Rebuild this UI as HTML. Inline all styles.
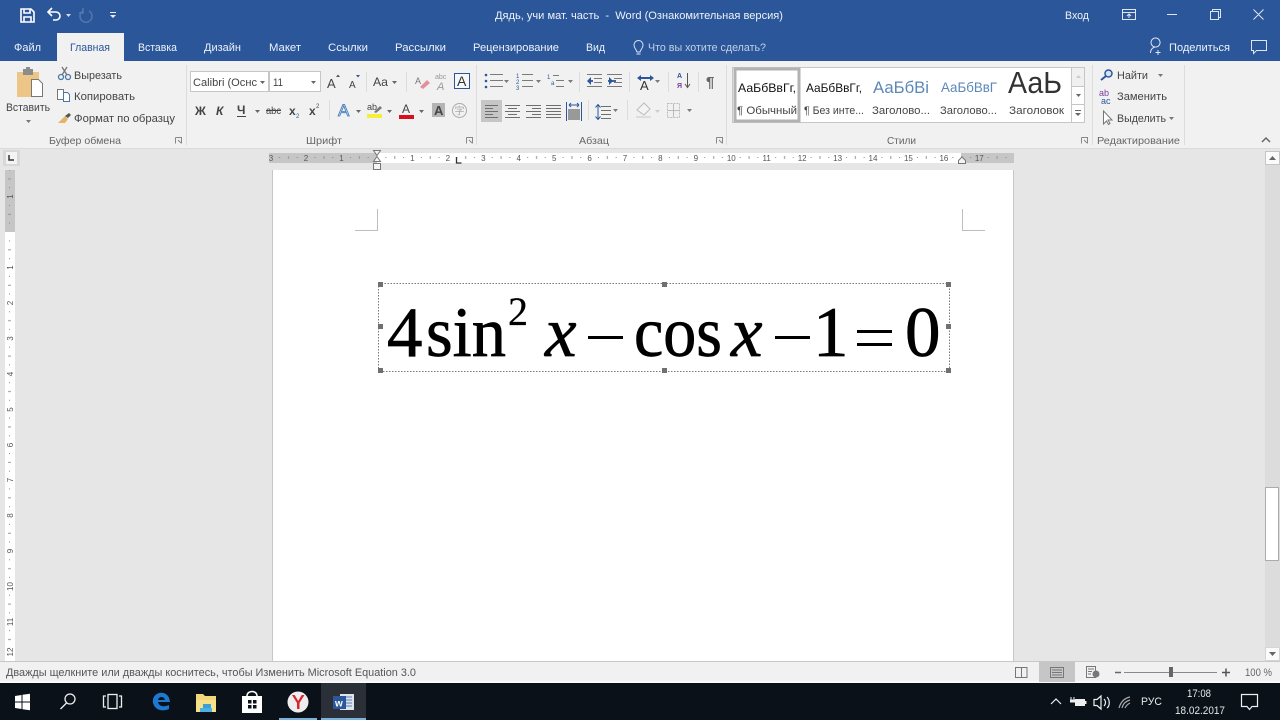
<!DOCTYPE html>
<html lang="ru"><head><meta charset="utf-8"><title>Word</title>
<style>
html,body{margin:0;padding:0;width:1280px;height:720px;overflow:hidden;background:#e6e6e6}
svg{display:block}
text{font-family:"Liberation Sans","Noto Sans CJK JP",sans-serif;font-size:11px;fill:#444}
.t text{fill:#eef2f8}
.serif{font-family:"Liberation Serif",serif;fill:#000;font-size:71px;stroke:#000;stroke-width:.7px}
.r text{font-size:8px;fill:#555;text-anchor:middle}
.g text{fill:#666;font-size:10.5px}
.w text{fill:#e8e8e8}
</style></head><body>
<svg width="1280" height="720" viewBox="0 0 1280 720" xmlns="http://www.w3.org/2000/svg">
<defs>
<pattern id="hr" width="35.43" height="10" patternUnits="userSpaceOnUse" patternTransform="translate(377,153)">
<rect x="8.4" y="4" width="1" height="1" fill="#888"/><rect x="17.3" y="3" width="1" height="3" fill="#999"/><rect x="26.1" y="4" width="1" height="1" fill="#888"/>
</pattern>
<pattern id="vr" width="10" height="35.43" patternUnits="userSpaceOnUse" patternTransform="translate(5,232)">
<rect x="4" y="8.4" width="1" height="1" fill="#888"/><rect x="3" y="17.3" width="3" height="1" fill="#999"/><rect x="4" y="26.1" width="1" height="1" fill="#888"/>
</pattern>
</defs>

<!-- base -->
<rect width="1280" height="720" fill="#e6e6e6"/>
<rect width="1280" height="61" fill="#2b579a"/>
<rect y="61" width="1280" height="87" fill="#f1f1f1"/>
<rect y="148" width="1280" height="1" fill="#dadada"/>
<rect x="57" y="33" width="67" height="28" fill="#f1f1f1"/>

<!-- QAT -->
<g fill="none" stroke="#fff" stroke-width="1.6">
<path d="M21 9h10l3 3v10H21z"/><path d="M24 9v4h6V9M24 22v-5h7v5"/>
<path d="M48 12h8a4 4 0 0 1 0 8h-3"/><path d="M52 8l-4 4 4 4"/>
</g>
<path d="M66 14h5l-2.500 3z" fill="#d5deec"/>
<path d="M83 11a6 6 0 1 0 6 0M83 8v5h-4" fill="none" stroke="#5478ae" stroke-width="1.500"/>
<path d="M110 12h6v1h-6zM110 15h6l-3 3z" fill="#e8eef6"/>

<!-- title -->
<g class="t">
<text x="495" y="19" textLength="288" lengthAdjust="spacingAndGlyphs" xml:space="preserve">Дядь, учи мат. часть  -  Word (Ознакомительная версия)</text>
<text x="1065" y="19" textLength="24" lengthAdjust="spacingAndGlyphs">Вход</text>
<text x="14" y="51" textLength="27" lengthAdjust="spacingAndGlyphs">Файл</text>
<text x="138" y="51" textLength="39" lengthAdjust="spacingAndGlyphs">Вставка</text>
<text x="204" y="51" textLength="37" lengthAdjust="spacingAndGlyphs">Дизайн</text>
<text x="269" y="51" textLength="32" lengthAdjust="spacingAndGlyphs">Макет</text>
<text x="328" y="51" textLength="40" lengthAdjust="spacingAndGlyphs">Ссылки</text>
<text x="395" y="51" textLength="51" lengthAdjust="spacingAndGlyphs">Рассылки</text>
<text x="473" y="51" textLength="86" lengthAdjust="spacingAndGlyphs">Рецензирование</text>
<text x="586" y="51" textLength="19" lengthAdjust="spacingAndGlyphs">Вид</text>
<text x="648" y="51" textLength="118" lengthAdjust="spacingAndGlyphs" style="fill:#c3d1e6">Что вы хотите сделать?</text>
<text x="1169" y="51" textLength="61" lengthAdjust="spacingAndGlyphs">Поделиться</text>
</g>
<text x="70" y="51" textLength="40" lengthAdjust="spacingAndGlyphs" style="fill:#2b579a">Главная</text>
<g fill="none" stroke="#dfe6f1" stroke-width="1">
<path d="M637 52c-1-3-3-4-3-7a4.500 4.500 0 0 1 9 0c0 3-2 4-3 7zM636.500 54h4"/>
<path d="M1150.500 53c0-4 3-6 5-6a4.500 4.500 0 1 1 .1 0M1158 50v5M1155.500 52.500h5"/>
<path d="M1251.500 40.500h15v10h-10l-3 3v-3h-2z"/>
<path d="M1122.500 9.500h13v10h-13zM1122.500 12.500h13M1129 18v-4M1127 16l2-2 2 2"/>
<path d="M1167 14.500h10M1210.500 11.500h8v8h-8zM1212.500 11.500v-2h8v8h-2M1253.500 9.500l10 10M1263.500 9.500l-10 10"/>
</g>

<!-- group separators -->
<g fill="#dcdcdc">
<rect x="186" y="65" width="1" height="80"/><rect x="476" y="65" width="1" height="80"/><rect x="726" y="65" width="1" height="80"/><rect x="1092" y="65" width="1" height="80"/><rect x="1184" y="65" width="1" height="80"/>
<rect x="366" y="72" width="1" height="20"/><rect x="406" y="72" width="1" height="20"/><rect x="329" y="100" width="1" height="20"/>
<rect x="579" y="72" width="1" height="20"/><rect x="629" y="72" width="1" height="20"/><rect x="668" y="72" width="1" height="20"/><rect x="698" y="72" width="1" height="20"/><rect x="588" y="100" width="1" height="20"/><rect x="627" y="100" width="1" height="20"/>
</g>

<!-- clipboard -->
<rect x="17" y="72" width="22" height="25" fill="#edc687"/>
<rect x="23" y="69" width="10" height="6" fill="#8c8c8c"/><rect x="26" y="67" width="4" height="3" fill="#8c8c8c"/>
<path d="M31.500 79.500h7l4 4v13h-11z" fill="#fff" stroke="#777"/>
<text x="6" y="111" textLength="44" lengthAdjust="spacingAndGlyphs">Вставить</text>
<path d="M26 120h5l-2.500 3z" fill="#777"/>
<g fill="none" stroke="#4a78a8" stroke-width="1.300"><circle cx="61" cy="77" r="2.500"/><circle cx="68" cy="77" r="2.500"/></g>
<path d="M62 75l5-8M67 75l-5-8" stroke="#777" stroke-width="1.300"/>
<path d="M57.500 89.500h6v10h-6z" fill="#fff" stroke="#777"/><path d="M63.500 92.500h4l2 2v7h-6z" fill="#fff" stroke="#4a78a8"/>
<path d="M58 123l7-7 3 3-3 4z" fill="#e3b465"/><path d="M65 116l4-3 2 2-3 3z" fill="#555"/>
<text x="74" y="79" textLength="48" lengthAdjust="spacingAndGlyphs">Вырезать</text>
<text x="74" y="100" textLength="61" lengthAdjust="spacingAndGlyphs">Копировать</text>
<text x="74" y="122" textLength="101" lengthAdjust="spacingAndGlyphs">Формат по образцу</text>

<!-- font -->
<rect x="190.500" y="71.500" width="78" height="20" fill="#fff" stroke="#c6c6c6"/>
<rect x="269.500" y="71.500" width="51" height="20" fill="#fff" stroke="#c6c6c6"/>
<text x="193" y="86" textLength="64" lengthAdjust="spacingAndGlyphs">Calibri (Оснс</text>
<text x="273" y="86" textLength="10" lengthAdjust="spacingAndGlyphs">11</text>
<path d="M260 81h5l-2.500 3zM311 81h5l-2.500 3z" fill="#666"/>
<text x="327" y="88" style="font-size:13px">A</text><path d="M336 77h4l-2-2.500z" fill="#555"/>
<text x="349" y="88" style="font-size:10px">A</text><path d="M356 75h4l-2 2.500z" fill="#2b579a"/>
<text x="373" y="86" style="font-size:12px" textLength="15" lengthAdjust="spacingAndGlyphs">Aa</text>
<path d="M392 81h5l-2.500 3z" fill="#666"/>
<text x="415" y="84" style="font-size:9px;fill:#777">A</text><path d="M420 87l7-7 3 3-7 6z" fill="#e58f9b"/>
<text x="435" y="79" style="font-size:7px;fill:#999">abc</text><text x="437" y="90" style="font-size:11px;font-style:italic;fill:#999">A</text>
<rect x="454.500" y="73.500" width="15" height="15" fill="#f7f7f7" stroke="#2b579a"/><text x="457" y="86" style="font-size:14px;fill:#333">A</text>

<text x="195" y="115" style="font-size:12px;font-weight:bold">Ж</text>
<text x="216" y="115" style="font-size:12px;font-weight:bold;font-style:italic">К</text>
<text x="237" y="114" style="font-size:12px;font-weight:bold">Ч</text><rect x="237" y="116" width="9" height="1" fill="#444"/>
<path d="M255 110h5l-2.500 3z" fill="#666"/>
<text x="266" y="114" textLength="15" lengthAdjust="spacingAndGlyphs" style="font-size:10px">abc</text><rect x="266" y="110" width="15" height="1" fill="#444"/>
<text x="289" y="115" style="font-size:12px;font-weight:bold">x</text><text x="296" y="118" style="font-size:6px;fill:#2b579a">2</text>
<text x="309" y="115" style="font-size:12px;font-weight:bold">x</text><text x="316" y="108" style="font-size:6px">2</text>
<text x="338" y="116" style="font-size:17px;fill:#cfe0f2;stroke:#3f78b5;stroke-width:.8">A</text>
<path d="M356 110h5l-2.500 3zM387 110h5l-2.500 3zM419 110h5l-2.500 3z" fill="#666"/>
<text x="367" y="110" style="font-size:9px">ab</text><path d="M374 112l6-6 2 2-6 5z" fill="#777"/><rect x="367" y="114" width="15" height="4" fill="#f5ee3a"/>
<text x="402" y="113" style="font-size:12px">A</text><rect x="399" y="115" width="15" height="4" fill="#d6101c"/>
<rect x="432" y="103" width="13" height="14" fill="#b4b4b4"/><text x="434" y="115" style="font-size:13px;font-weight:bold;fill:#444">A</text>
<circle cx="459.500" cy="110.500" r="7" fill="none" stroke="#aaa"/><text x="454.500" y="114.500" style="font-size:10px;fill:#aaa;font-family:'Noto Sans CJK SC',sans-serif">字</text>

<!-- paragraph -->
<g fill="#7a7a7a">
<path d="M490 74h13v1h-13zM490 80h13v1h-13zM490 86h13v1h-13z"/>
<path d="M522 74h11v1h-11zM522 80h11v1h-11zM522 86h11v1h-11zM553 75h6v1h-6zM556 80h8v1h-8zM556 86h8v1h-8z"/>
<path d="M504 80h5l-2.500 3zM536 80h5l-2.500 3zM568 80h5l-2.500 3zM655 80h5l-2.500 3zM613 109h5l-2.500 3zM687 109h5l-2.500 3z"/>
<path d="M587 74h15v1h-15zM594 78h8v1h-8zM594 82h8v1h-8zM587 86h15v1h-15zM607 74h15v1h-15zM614 78h8v1h-8zM614 82h8v1h-8zM607 86h15v1h-15z"/>
</g>
<g fill="#2b579a">
<circle cx="486" cy="75" r="1.300"/><circle cx="486" cy="81" r="1.300"/><circle cx="486" cy="87" r="1.300"/>
<path d="M588 80h5v2h-5zM616 80h-8v2h8z" opacity=".9"/><path d="M591 77v8l-4-4zM609 77v8l4-4z"/>
</g>
<text x="516" y="78" style="font-size:6px;fill:#2b579a">1</text><text x="516" y="84" style="font-size:6px;fill:#2b579a">2</text><text x="516" y="90" style="font-size:6px;fill:#2b579a">3</text>
<text x="547" y="79" style="font-size:6px;fill:#2b579a">1</text><text x="551" y="85" style="font-size:6px;fill:#2b579a">a</text>
<text x="640" y="90" style="font-size:13px;fill:#333">A</text><path d="M637 78l4-3v2h9v-2l4 3-4 3v-2h-9v2z" fill="#2b579a"/>
<text x="677" y="78" style="font-size:7px;font-weight:bold;fill:#2b579a">А</text><text x="677" y="88" style="font-size:7px;font-weight:bold;fill:#7a3f9e">Я</text>
<path d="M687.500 73v14M685 84l2.500 3.500 2.500-3.500" fill="none" stroke="#555"/>
<text x="706" y="87" style="font-size:15px;font-weight:bold;fill:#666">¶</text>
<rect x="481" y="100" width="21" height="22" fill="#c6c6c6"/>
<g fill="#6e6e6e">
<path d="M485 105h13v1h-13zM485 108h8v1h-8zM485 111h13v1h-13zM485 114h8v1h-8zM485 117h13v1h-13z"/>
<path d="M505 105h15v1h-15zM508 108h9v1h-9zM505 111h15v1h-15zM508 114h9v1h-9zM505 117h15v1h-15z"/>
<path d="M526 105h15v1h-15zM532 108h9v1h-9zM526 111h15v1h-15zM532 114h9v1h-9zM526 117h15v1h-15z"/>
<path d="M546 105h15v1h-15zM546 108h15v1h-15zM546 111h15v1h-15zM546 114h15v1h-15zM546 117h15v1h-15z"/>
<path d="M601 106h10v1h-10zM601 110h10v1h-10zM601 114h10v1h-10zM601 118h10v1h-10z"/>
</g>
<path d="M566.500 102v19M581.500 102v19" stroke="#2b579a"/><path d="M569 105h10M569 105l2-2M569 105l2 2M579 105l-2-2M579 105l-2 2" stroke="#2b579a" fill="none"/>
<rect x="568" y="109" width="12" height="11" fill="#999"/>
<path d="M598 105v14M595.500 107.500l2.500-3 2.500 3M595.500 116.500l2.500 3 2.500-3" fill="none" stroke="#2b579a"/>
<path d="M637 110l7-7 6 6-6 6z" fill="#f4f4f4" stroke="#bbb"/><rect x="636" y="116" width="15" height="2" fill="#ddd"/>
<path d="M655 110h5l-2.500 3z" fill="#ccc"/>
<rect x="667.500" y="103.500" width="12" height="14" fill="none" stroke="#bbb" stroke-dasharray="2 1"/><path d="M673.500 104v13M668 110.500h11" stroke="#bbb"/>

<!-- styles -->
<rect x="732.500" y="67.500" width="352" height="55" fill="#fff" stroke="#c6c6c6"/>
<rect x="735" y="69" width="64" height="52" fill="#fff" stroke="#b2b2b2" stroke-width="3"/>
<text x="738" y="92" textLength="58" lengthAdjust="spacingAndGlyphs" style="fill:#111;font-size:12px">АаБбВвГг,</text>
<text x="806" y="92" textLength="56" lengthAdjust="spacingAndGlyphs" style="fill:#111;font-size:12px">АаБбВвГг,</text>
<text x="873" y="93" textLength="56" lengthAdjust="spacingAndGlyphs" style="fill:#5b88b8;font-size:17px">АаБбВі</text>
<text x="941" y="92" textLength="56" lengthAdjust="spacingAndGlyphs" style="fill:#5b88b8;font-size:14px">АаБбВвГ</text>
<text x="1008" y="93" textLength="54" lengthAdjust="spacingAndGlyphs" style="fill:#333;font-size:31px">АаЬ</text>
<text x="737" y="114" textLength="60" lengthAdjust="spacingAndGlyphs">¶ Обычный</text>
<text x="804" y="114" textLength="60" lengthAdjust="spacingAndGlyphs">¶ Без инте...</text>
<text x="872" y="114" textLength="58" lengthAdjust="spacingAndGlyphs">Заголово...</text>
<text x="940" y="114" textLength="57" lengthAdjust="spacingAndGlyphs">Заголово...</text>
<text x="1009" y="114" textLength="55" lengthAdjust="spacingAndGlyphs">Заголовок</text>
<rect x="1071.500" y="67.500" width="13" height="19" fill="#f0f0f0" stroke="#c6c6c6"/>
<rect x="1071.500" y="86.500" width="13" height="18" fill="#fff" stroke="#c6c6c6"/>
<rect x="1071.500" y="104.500" width="13" height="18" fill="#fff" stroke="#c6c6c6"/>
<path d="M1076 78h5l-2.500-3z" fill="#ccc"/><path d="M1076 94h5l-2.500 3z" fill="#666"/><path d="M1075 110h6v1h-6zM1075 113h6l-3 3z" fill="#666"/>

<!-- editing -->
<circle cx="1108.500" cy="73.500" r="3.500" fill="#d5e4f3" stroke="#2b579a" stroke-width="1.500"/><path d="M1106 76l-5 4" stroke="#2b579a" stroke-width="2"/>
<text x="1117" y="79" textLength="31" lengthAdjust="spacingAndGlyphs">Найти</text><path d="M1158 74h5l-2.500 3z" fill="#777"/>
<text x="1099" y="96" style="font-size:9px;fill:#7a3f9e">ab</text><text x="1101" y="104" style="font-size:9px;fill:#2b579a">ac</text>
<text x="1117" y="100" textLength="50" lengthAdjust="spacingAndGlyphs">Заменить</text>
<path d="M1103.500 111v13l3-3 2 3.500 1.500-1-2-3.500h4z" fill="#fff" stroke="#777"/>
<text x="1117" y="122" textLength="49" lengthAdjust="spacingAndGlyphs">Выделить</text><path d="M1169 117h5l-2.500 3z" fill="#777"/>
<path d="M1262 142l4-4 4 4" fill="none" stroke="#666" stroke-width="1.500"/>

<!-- group labels -->
<g class="g">
<text x="49" y="144" textLength="72" lengthAdjust="spacingAndGlyphs">Буфер обмена</text>
<text x="306" y="144" textLength="36" lengthAdjust="spacingAndGlyphs">Шрифт</text>
<text x="579" y="144" textLength="30" lengthAdjust="spacingAndGlyphs">Абзац</text>
<text x="887" y="144" textLength="29" lengthAdjust="spacingAndGlyphs">Стили</text>
<text x="1097" y="144" textLength="83" lengthAdjust="spacingAndGlyphs">Редактирование</text>
</g>
<g fill="none" stroke="#888"><path d="M175.500 137.500h6v6M175.500 143.500v-6M178 140l3 3M466.500 137.500h6v6M466.500 143.500v-6M469 140l3 3M716.500 137.500h6v6M716.500 143.500v-6M719 140l3 3M1081.500 137.500h6v6M1081.500 143.500v-6M1084 140l3 3"/></g>

<!-- ruler corner -->
<rect x="3" y="150" width="17" height="16" fill="#d8d8d8"/><rect x="6" y="152" width="11" height="12" fill="#f4f4f4"/>
<path d="M9 155v5h5" fill="none" stroke="#333" stroke-width="1.500"/>

<!-- horizontal ruler -->
<rect x="269" y="153" width="745" height="10" fill="#fff"/>
<rect x="269" y="153" width="108" height="10" fill="#c6c6c6"/>
<rect x="961" y="153" width="53" height="10" fill="#c6c6c6"/>
<rect x="269" y="153" width="745" height="10" fill="url(#hr)"/>
<g class="r">
<text x="271" y="161">3</text><text x="306" y="161">2</text><text x="341.500" y="161">1</text>
<text x="412.400" y="161">1</text><text x="447.900" y="161">2</text><text x="483.300" y="161">3</text><text x="518.700" y="161">4</text><text x="554.200" y="161">5</text><text x="589.600" y="161">6</text><text x="625" y="161">7</text><text x="660.400" y="161">8</text><text x="695.900" y="161">9</text><text x="731.300" y="161">10</text><text x="766.700" y="161">11</text><text x="802.200" y="161">12</text><text x="837.600" y="161">13</text><text x="873" y="161">14</text><text x="908.400" y="161">15</text><text x="943.900" y="161">16</text><text x="979.300" y="161">17</text>
</g>
<path d="M373.500 150.500h7l-3.500 5zM373.500 161.500l3.500-5 3.500 5zM373.500 163.500h7v6h-7z" fill="#f4f4f4" stroke="#777"/>
<path d="M958.500 163.500v-3l3.500-3.500 3.500 3.500v3z" fill="#f4f4f4" stroke="#777"/>
<path d="M456.500 157v6h5" fill="none" stroke="#333" stroke-width="1.300"/>

<!-- vertical ruler -->
<rect x="5" y="170" width="10" height="491" fill="#fff"/>
<rect x="5" y="170" width="10" height="62" fill="#c6c6c6"/>
<rect x="5" y="170" width="10" height="491" fill="url(#vr)"/>
<g class="r">
<text transform="translate(13,196.500) rotate(-90)">1</text>
<text transform="translate(13,267.500) rotate(-90)">1</text>
<text transform="translate(13,303) rotate(-90)">2</text>
<text transform="translate(13,338.500) rotate(-90)">3</text>
<text transform="translate(13,374) rotate(-90)">4</text>
<text transform="translate(13,409.500) rotate(-90)">5</text>
<text transform="translate(13,445) rotate(-90)">6</text>
<text transform="translate(13,480) rotate(-90)">7</text>
<text transform="translate(13,515.500) rotate(-90)">8</text>
<text transform="translate(13,551) rotate(-90)">9</text>
<text transform="translate(13,586.500) rotate(-90)">10</text>
<text transform="translate(13,622) rotate(-90)">11</text>
<text transform="translate(13,652) rotate(-90)">12</text>
</g>

<!-- page -->
<rect x="272" y="170" width="742" height="492" fill="#fff"/>
<rect x="272" y="170" width="1" height="492" fill="#c6c6c6"/><rect x="1013" y="170" width="1" height="492" fill="#c6c6c6"/>
<path d="M355 230.500h22.500V209M985 230.500h-22.500V209" fill="none" stroke="#bdbdbd"/>

<!-- equation -->
<rect x="378.500" y="283.500" width="571" height="88" fill="none" stroke="#777" stroke-dasharray="1.500 1.500"/>
<g fill="#707070">
<rect x="378" y="282" width="5" height="5"/><rect x="662" y="282" width="5" height="5"/><rect x="946" y="282" width="5" height="5"/>
<rect x="378" y="324" width="5" height="5"/><rect x="946" y="324" width="5" height="5"/>
<rect x="378" y="368" width="5" height="5"/><rect x="662" y="368" width="5" height="5"/><rect x="946" y="368" width="5" height="5"/>
</g>
<text class="serif" x="387" y="356">4</text>
<text class="serif" x="426" y="356" textLength="80" lengthAdjust="spacingAndGlyphs">sin</text>
<text class="serif" x="508" y="325" style="font-size:40px;stroke-width:.3px">2</text>
<text class="serif" x="545" y="356" style="font-style:italic">x</text>
<rect x="588" y="336" width="35" height="3" fill="#000"/>
<text class="serif" x="634" y="356" textLength="88" lengthAdjust="spacingAndGlyphs">cos</text>
<text class="serif" x="731" y="356" style="font-style:italic">x</text>
<rect x="775" y="336" width="35" height="3" fill="#000"/>
<text class="serif" x="813" y="356">1</text>
<rect x="857" y="330" width="35" height="3" fill="#000"/><rect x="857" y="343" width="35" height="3" fill="#000"/>
<text class="serif" x="905" y="356">0</text>

<!-- scrollbar -->
<rect x="1265" y="151" width="15" height="510" fill="#dcdcdc"/>
<rect x="1265.500" y="151.500" width="14" height="13" fill="#fbfbfb" stroke="#c6c6c6"/>
<path d="M1269 160h7l-3.500-4z" fill="#666"/>
<rect x="1265.500" y="487.500" width="13" height="73" fill="#fff" stroke="#ababab"/>
<rect x="1265.500" y="647.500" width="14" height="13" fill="#fbfbfb" stroke="#d5d5d5"/>
<path d="M1269 652h7l-3.500 4z" fill="#666"/>

<!-- status bar -->
<rect y="662" width="1280" height="20" fill="#f1f1f1"/><rect y="661" width="1280" height="1" fill="#c8c8c8"/>
<rect y="681" width="1280" height="2" fill="#fafafa"/>
<text x="6" y="676" textLength="410" lengthAdjust="spacingAndGlyphs" style="fill:#555">Дважды щелкните или дважды коснитесь, чтобы Изменить Microsoft Equation 3.0</text>
<rect x="1039" y="662" width="36" height="20" fill="#c6c6c6"/>
<g fill="none" stroke="#777">
<path d="M1015.500 667.500h5.500l.5 1 .5-1h5v10h-11.500zM1021.500 668v9"/>
<path d="M1050.500 667.500h13v10h-13zM1052 670h10M1052 672.500h10M1052 675h10"/>
<path d="M1086.500 666.500h9v11h-9zM1088 669h6M1088 671.500h4M1088 674h3"/>
</g>
<circle cx="1096" cy="674" r="3.500" fill="#777"/>
<path d="M1115 672.500h6" stroke="#666" stroke-width="1.500"/>
<rect x="1124" y="672" width="93" height="1" fill="#888"/>
<rect x="1169" y="667" width="4" height="10" fill="#666"/>
<path d="M1222 672.500h8M1226 668.500v8" stroke="#555" stroke-width="1.500"/>
<text x="1245" y="676" textLength="27" lengthAdjust="spacingAndGlyphs" style="fill:#666">100 %</text>

<!-- taskbar -->
<rect y="683" width="1280" height="37" fill="#0a1119"/>
<rect x="321" y="683" width="45" height="37" fill="#2b3038"/>
<rect x="279" y="718" width="38" height="2" fill="#7db2d8"/><rect x="321" y="718" width="45" height="2" fill="#7db2d8"/>
<g fill="#fff"><path d="M15 696l6.500-1v6.500H15zM22.500 694.800l7.500-1.100v7.800h-7.500zM15 702.500h6.500v6.500l-6.500-1zM22.500 702.500h7.500v7.800l-7.500-1.100z"/></g>
<g fill="none" stroke="#eee" stroke-width="1.300">
<circle cx="70" cy="699" r="5"/><path d="M66.500 703l-6 6"/>
<path d="M106 696h-2.500v11h2.500M119 696h2.500v11H119"/><rect x="108" y="694.500" width="9" height="14"/>
</g>
<path d="M153 703c-2-12 16-15 17-1h-12c1 5 7 5 11 3v4c-7 3-14 1-16-6zm5-3h7c-1-4-6-4-7 0z" fill="#1d78d0"/>
<path d="M196 694h7l2 2h11v16h-20z" fill="#f1d67a"/><rect x="196" y="700" width="20" height="12" fill="#f6e08a"/><rect x="203" y="704" width="8" height="4" fill="#39a0d8"/><rect x="200" y="708" width="12" height="4" fill="#4bb1e0"/>
<path d="M242 696h20v17h-20z" fill="#fff"/><path d="M247 696c0-6 10-6 10 0" fill="none" stroke="#fff" stroke-width="1.500"/>
<g fill="#0a1119"><rect x="248" y="700" width="3.500" height="3.500"/><rect x="253" y="700" width="3.500" height="3.500"/><rect x="248" y="705" width="3.500" height="3.500"/><rect x="253" y="705" width="3.500" height="3.500"/></g>
<circle cx="298" cy="702" r="10.500" fill="#eee"/><path d="M292 695l5 8v6h2.500v-6l5-8h-2.800l-3.500 6-3.500-6z" fill="#d8262c"/>
<rect x="340" y="694" width="14" height="16" fill="#dde4ee"/><path d="M343 697h9M343 700h9M343 703h9M343 706h9" stroke="#5b7db1"/>
<rect x="333" y="696" width="13" height="13" fill="#2b579a"/>
<text x="335" y="706.500" style="font-size:10px;font-weight:bold;fill:#fff">w</text>

<!-- tray -->
<g fill="none" stroke="#eee" stroke-width="1.200">
<path d="M1051 704l5-5 5 5"/>
<path d="M1094 699.500h3l4-3.500v13l-4-3.500h-3zM1104 699c2 2 2 5 0 7M1107 697c3 3 3 9 0 11"/>
<path d="M1241.500 694.500h16v12h-5.500l-2.500 3-2.500-3h-5.500z"/>
<path d="M1119 708c2-7 6-10 11-11M1122 708c1-4 4-7 8-8M1125 708c1-2 3-4 5-5" stroke="#aaa"/>
</g>
<rect x="1075" y="699" width="10" height="7" fill="#eee"/><rect x="1085" y="701" width="1.500" height="3" fill="#eee"/>
<path d="M1071 697v3M1074 697v3M1070.500 700h4.500v2h-4.500z" stroke="#eee" fill="#eee"/>
<g class="w">
<text x="1141" y="705" textLength="21" lengthAdjust="spacingAndGlyphs">РУС</text>
<text x="1187" y="697" textLength="24" lengthAdjust="spacingAndGlyphs">17:08</text>
<text x="1175" y="714" textLength="50" lengthAdjust="spacingAndGlyphs">18.02.2017</text>
</g>
</svg>
</body></html>
